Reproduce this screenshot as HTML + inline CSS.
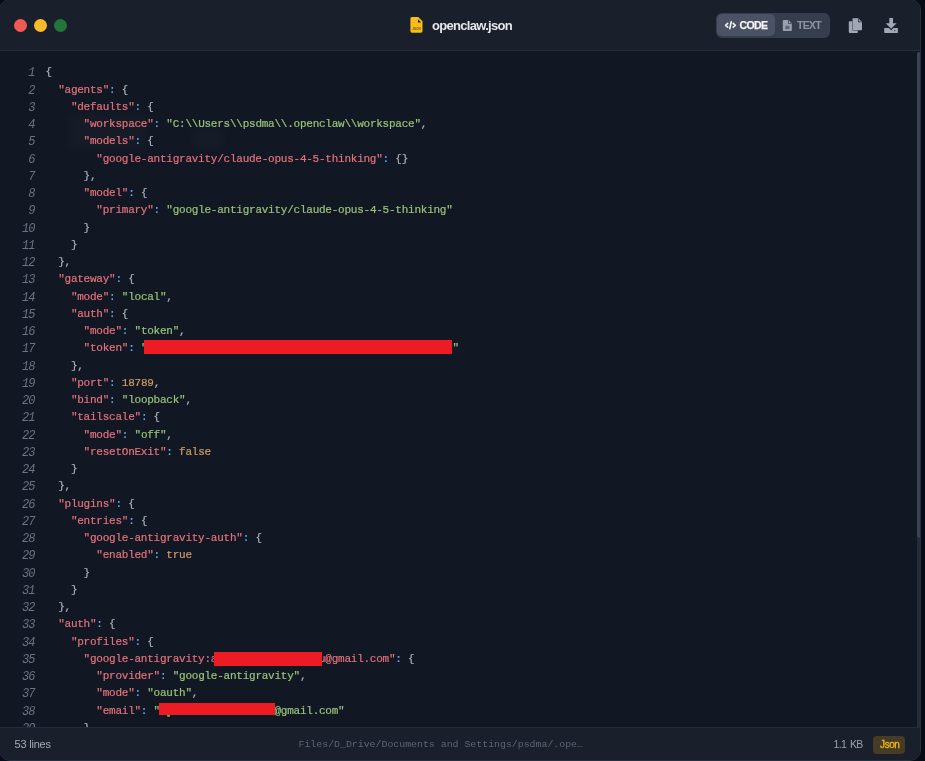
<!DOCTYPE html>
<html><head><meta charset="utf-8">
<style>
*{box-sizing:border-box;margin:0;padding:0}
html,body{width:925px;height:761px;overflow:hidden;background:#080c14}
body{position:relative;font-family:"Liberation Sans",sans-serif}
.win{position:absolute;left:-1px;top:-1px;width:922px;height:762px;border:1px solid #283040;border-radius:11px;overflow:hidden;background:#111723;will-change:transform}
.hdr{position:absolute;left:0;top:0;width:920px;height:51px;background:#1a1f2c;border-bottom:1px solid #232c38}
.dot{position:absolute;top:18.5px;width:13px;height:13px;border-radius:50%}
.ab{position:absolute}
.fname{position:absolute;left:432px;top:16.5px;font-size:13px;font-weight:bold;letter-spacing:-0.7px;color:#e5e7eb;line-height:18px;white-space:nowrap}
.tog{position:absolute;left:716px;top:13px;width:114px;height:25px;border-radius:6px;background:#363e4e}
.act{position:absolute;left:1px;top:1px;width:58px;height:22px;border-radius:5px;background:#4a5263}
.tl{position:absolute;font-size:10.5px;font-weight:bold;line-height:14px;white-space:nowrap;-webkit-text-stroke:0.25px currentColor}
.code{position:absolute;left:0;top:51px;width:920px;height:676px;overflow:hidden;will-change:transform;-webkit-text-stroke:0.2px currentColor}
.ln{position:absolute;left:0;width:34.5px;margin-top:1px;-webkit-text-stroke:0;text-align:right;font-family:"Liberation Mono",monospace;font-style:italic;font-size:12px;letter-spacing:-0.9px;line-height:17.25px;color:#6b7280}
.lc{position:absolute;left:45.45px;font-family:"Liberation Mono",monospace;font-size:11px;letter-spacing:-0.24px;line-height:17.25px;color:#abb2bf;white-space:pre}
.k{color:#e5727b}.s{color:#98c379}.n{color:#d19a66}.p{color:#56b6c2}.c{color:#61afef}
.red{position:absolute;background:#ed1c24}
.ftr{position:absolute;left:0;top:727px;width:920px;height:33px;background:#1a1f2c;border-top:1px solid #232c38}
.sb{position:absolute;left:917px;width:4px}
</style></head>
<body>
<div class="win">
  <div class="hdr">
    <div class="dot" style="left:14px;background:#f05a55"></div>
    <div class="dot" style="left:34px;background:#f9b92a"></div>
    <div class="dot" style="left:54px;background:#23763a"></div>
    <svg class="ab" style="left:409px;top:14.5px" width="16" height="19" viewBox="0 0 16 19">
      <path d="M3 2h6.2l4.3 4.3v9.8a1.6 1.6 0 0 1-1.6 1.6H3a1.6 1.6 0 0 1-1.6-1.6V3.6A1.6 1.6 0 0 1 3 2z" fill="#f8bd1c"/>
      <path d="M9 4.2v3.2h3.2z" fill="#1a1f2c"/>
      <text x="7.5" y="14.5" font-size="3.2" font-family="Liberation Sans" font-weight="bold" fill="#7a5e12" text-anchor="middle">JSON</text>
    </svg>
    <div class="fname">openclaw.json</div>
    <div class="tog">
      <div class="act"></div>
      <svg class="ab" style="left:8px;top:7px" width="13" height="11" viewBox="0 0 13 11">
        <path d="M3.7 3.4L1.6 5.3l2.1 1.9M9.2 3.4l2.1 1.9-2.1 1.9M7.2 1.9L5.8 8.7" stroke="#eef0f3" stroke-width="1.7" fill="none" stroke-linecap="round" stroke-linejoin="round"/>
      </svg>
      <div class="tl" style="left:23.5px;top:5px;color:#f1f2f4;letter-spacing:-0.6px">CODE</div>
      <svg class="ab" style="left:66px;top:6px" width="11" height="13" viewBox="0 0 11 13">
        <path d="M1.8 0.9h4.6l3.4 3.4v6.6a1 1 0 0 1-1 1H1.8a1 1 0 0 1-1-1V1.9a1 1 0 0 1 1-1z" fill="#9aa1ae"/>
        <path d="M6.1 0.9v3.8h3.8z" fill="#363e4e"/>
        <path d="M6.9 1.7v2.2h2.2z" fill="#9aa1ae"/>
        <rect x="3.3" y="6.8" width="4.2" height="3.3" fill="#5f6775"/>
      </svg>
      <div class="tl" style="left:81px;top:5px;color:#8b93a1;letter-spacing:-0.75px;-webkit-text-stroke:0.1px currentColor">TEXT</div>
    </div>
    <svg class="ab" style="left:846px;top:14.5px" width="18" height="20" viewBox="0 0 18 20">
      <path d="M3.6 6.3h2.6v8a1.2 1.2 0 0 0 1.2 1.2h4.4v1.7a0.7 0.7 0 0 1-0.7 0.7H3.6a0.8 0.8 0 0 1-0.8-0.8V7.1a0.8 0.8 0 0 1 0.8-0.8z" fill="#a1a8b5"/>
      <path d="M7.3 3.3h5.1l3.6 3.6v7.5a0.8 0.8 0 0 1-0.8 0.8H7.3a0.8 0.8 0 0 1-0.8-0.8V4.1a0.8 0.8 0 0 1 0.8-0.8z" fill="#a1a8b5"/>
      <path d="M12 3.3v3.9h3.9z" fill="#1a1f2c"/>
      <path d="M12.7 3.9v2.6h2.6z" fill="#a1a8b5"/>
    </svg>
    <svg class="ab" style="left:881.5px;top:14.5px" width="18" height="20" viewBox="0 0 18 20">
      <path d="M7.3 3h3.7v5.3h3.6L9.15 13.8 3.7 8.3h3.6z" fill="#a1a8b5"/>
      <path d="M2.2 13h4.6l2.35 2.35L11.5 13h4.4v4.3a0.6 0.6 0 0 1-0.6 0.6H2.8a0.6 0.6 0 0 1-0.6-0.6z" fill="#a1a8b5"/>
      <circle cx="12.8" cy="15.6" r="0.55" fill="#1a1f2c"/>
    </svg>
  </div>
  <div class="code" id="code">
<div class="ab" style="left:68px;top:63px;width:80px;height:36px;background:rgba(255,236,210,0.022);filter:blur(5px)"></div>
<div class="ab" style="left:192px;top:77px;width:32px;height:22px;background:rgba(255,236,210,0.022);filter:blur(4px)"></div>
<div class="ln" style="top:13.30px">1</div><div class="lc" style="top:13.30px">{</div>
<div class="ln" style="top:30.55px">2</div><div class="lc" style="top:30.55px">  <span class="k">&quot;agents&quot;</span><span class="c">:</span> {</div>
<div class="ln" style="top:47.80px">3</div><div class="lc" style="top:47.80px">    <span class="k">&quot;defaults&quot;</span><span class="c">:</span> {</div>
<div class="ln" style="top:65.05px">4</div><div class="lc" style="top:65.05px">      <span class="k">&quot;workspace&quot;</span><span class="c">:</span> <span class="s">&quot;C:\\Users\\psdma\\.openclaw\\workspace&quot;</span>,</div>
<div class="ln" style="top:82.30px">5</div><div class="lc" style="top:82.30px">      <span class="k">&quot;models&quot;</span><span class="c">:</span> {</div>
<div class="ln" style="top:99.55px">6</div><div class="lc" style="top:99.55px">        <span class="k">&quot;google-antigravity/claude-opus-4-5-thinking&quot;</span><span class="c">:</span> {}</div>
<div class="ln" style="top:116.80px">7</div><div class="lc" style="top:116.80px">      },</div>
<div class="ln" style="top:134.05px">8</div><div class="lc" style="top:134.05px">      <span class="k">&quot;model&quot;</span><span class="c">:</span> {</div>
<div class="ln" style="top:151.30px">9</div><div class="lc" style="top:151.30px">        <span class="k">&quot;primary&quot;</span><span class="c">:</span> <span class="s">&quot;google-antigravity/claude-opus-4-5-thinking&quot;</span></div>
<div class="ln" style="top:168.55px">10</div><div class="lc" style="top:168.55px">      }</div>
<div class="ln" style="top:185.80px">11</div><div class="lc" style="top:185.80px">    }</div>
<div class="ln" style="top:203.05px">12</div><div class="lc" style="top:203.05px">  },</div>
<div class="ln" style="top:220.30px">13</div><div class="lc" style="top:220.30px">  <span class="k">&quot;gateway&quot;</span><span class="c">:</span> {</div>
<div class="ln" style="top:237.55px">14</div><div class="lc" style="top:237.55px">    <span class="k">&quot;mode&quot;</span><span class="c">:</span> <span class="s">&quot;local&quot;</span>,</div>
<div class="ln" style="top:254.80px">15</div><div class="lc" style="top:254.80px">    <span class="k">&quot;auth&quot;</span><span class="c">:</span> {</div>
<div class="ln" style="top:272.05px">16</div><div class="lc" style="top:272.05px">      <span class="k">&quot;mode&quot;</span><span class="c">:</span> <span class="s">&quot;token&quot;</span>,</div>
<div class="ln" style="top:289.30px">17</div><div class="lc" style="top:289.30px">      <span class="k">&quot;token&quot;</span><span class="c">:</span> <span class="s">&quot;xxxxxxxxxxxxxxxxxxxxxxxxxxxxxxxxxxxxxxxxxxxxxxxx&quot;</span></div>
<div class="ln" style="top:306.55px">18</div><div class="lc" style="top:306.55px">    },</div>
<div class="ln" style="top:323.80px">19</div><div class="lc" style="top:323.80px">    <span class="k">&quot;port&quot;</span><span class="c">:</span> <span class="n">18789</span>,</div>
<div class="ln" style="top:341.05px">20</div><div class="lc" style="top:341.05px">    <span class="k">&quot;bind&quot;</span><span class="c">:</span> <span class="s">&quot;loopback&quot;</span>,</div>
<div class="ln" style="top:358.30px">21</div><div class="lc" style="top:358.30px">    <span class="k">&quot;tailscale&quot;</span><span class="c">:</span> {</div>
<div class="ln" style="top:375.55px">22</div><div class="lc" style="top:375.55px">      <span class="k">&quot;mode&quot;</span><span class="c">:</span> <span class="s">&quot;off&quot;</span>,</div>
<div class="ln" style="top:392.80px">23</div><div class="lc" style="top:392.80px">      <span class="k">&quot;resetOnExit&quot;</span><span class="c">:</span> <span class="n">false</span></div>
<div class="ln" style="top:410.05px">24</div><div class="lc" style="top:410.05px">    }</div>
<div class="ln" style="top:427.30px">25</div><div class="lc" style="top:427.30px">  },</div>
<div class="ln" style="top:444.55px">26</div><div class="lc" style="top:444.55px">  <span class="k">&quot;plugins&quot;</span><span class="c">:</span> {</div>
<div class="ln" style="top:461.80px">27</div><div class="lc" style="top:461.80px">    <span class="k">&quot;entries&quot;</span><span class="c">:</span> {</div>
<div class="ln" style="top:479.05px">28</div><div class="lc" style="top:479.05px">      <span class="k">&quot;google-antigravity-auth&quot;</span><span class="c">:</span> {</div>
<div class="ln" style="top:496.30px">29</div><div class="lc" style="top:496.30px">        <span class="k">&quot;enabled&quot;</span><span class="c">:</span> <span class="n">true</span></div>
<div class="ln" style="top:513.55px">30</div><div class="lc" style="top:513.55px">      }</div>
<div class="ln" style="top:530.80px">31</div><div class="lc" style="top:530.80px">    }</div>
<div class="ln" style="top:548.05px">32</div><div class="lc" style="top:548.05px">  },</div>
<div class="ln" style="top:565.30px">33</div><div class="lc" style="top:565.30px">  <span class="k">&quot;auth&quot;</span><span class="c">:</span> {</div>
<div class="ln" style="top:582.55px">34</div><div class="lc" style="top:582.55px">    <span class="k">&quot;profiles&quot;</span><span class="c">:</span> {</div>
<div class="ln" style="top:599.80px">35</div><div class="lc" style="top:599.80px">      <span class="k">&quot;google-antigravity:axxxxxxxxxxxxxxxxu@gmail.com&quot;</span><span class="c">:</span> {</div>
<div class="ln" style="top:617.05px">36</div><div class="lc" style="top:617.05px">        <span class="k">&quot;provider&quot;</span><span class="c">:</span> <span class="s">&quot;google-antigravity&quot;</span>,</div>
<div class="ln" style="top:634.30px">37</div><div class="lc" style="top:634.30px">        <span class="k">&quot;mode&quot;</span><span class="c">:</span> <span class="s">&quot;oauth&quot;</span>,</div>
<div class="ln" style="top:651.55px">38</div><div class="lc" style="top:651.55px">        <span class="k">&quot;email&quot;</span><span class="c">:</span> <span class="s">&quot;xxxxxxxxxxxxxxxxxx@gmail.com&quot;</span></div>
<div class="ln" style="top:668.80px">39</div><div class="lc" style="top:668.80px">      },</div>
<div class="red" style="left:144px;top:289px;width:308px;height:14px"></div>
<div class="red" style="left:214px;top:601px;width:108px;height:14px"></div>
<div class="red" style="left:159px;top:652px;width:116px;height:12px"></div>
<div class="ab" style="left:166.5px;top:664.0px;width:3.5px;height:1.6px;border-radius:0 0 2px 2px;background:#98c379;opacity:.8"></div>
</div>
  <div class="sb" style="top:52px;height:486px;background:#3a4253;border-radius:2px"></div>
  <div class="sb" style="top:538px;height:189px;background:#242b39"></div>
  <div class="ftr">
    <div class="ab" style="left:14.5px;top:8.7px;font-size:11px;letter-spacing:-0.2px;line-height:14px;color:#a5abb6">53 lines</div>
    <div class="ab" style="left:298.5px;top:9.5px;font-family:'Liberation Mono',monospace;font-size:9.9px;line-height:14px;color:#5c6573;white-space:pre">Files/D_Drive/Documents and Settings/psdma/.ope…</div>
    <div class="ab" style="left:833.5px;top:9px;font-size:10.5px;letter-spacing:-0.6px;word-spacing:1.3px;line-height:14px;color:#9ca3af">1.1 KB</div>
    <div class="ab" style="left:873px;top:8px;width:32px;height:18px;border-radius:4px;background:#463b24;color:#f5b81c;font-size:10px;letter-spacing:-0.45px;line-height:18px;text-align:center;padding-left:1.5px;-webkit-text-stroke:0.3px currentColor">Json</div>
  </div>
</div>
</body></html>
